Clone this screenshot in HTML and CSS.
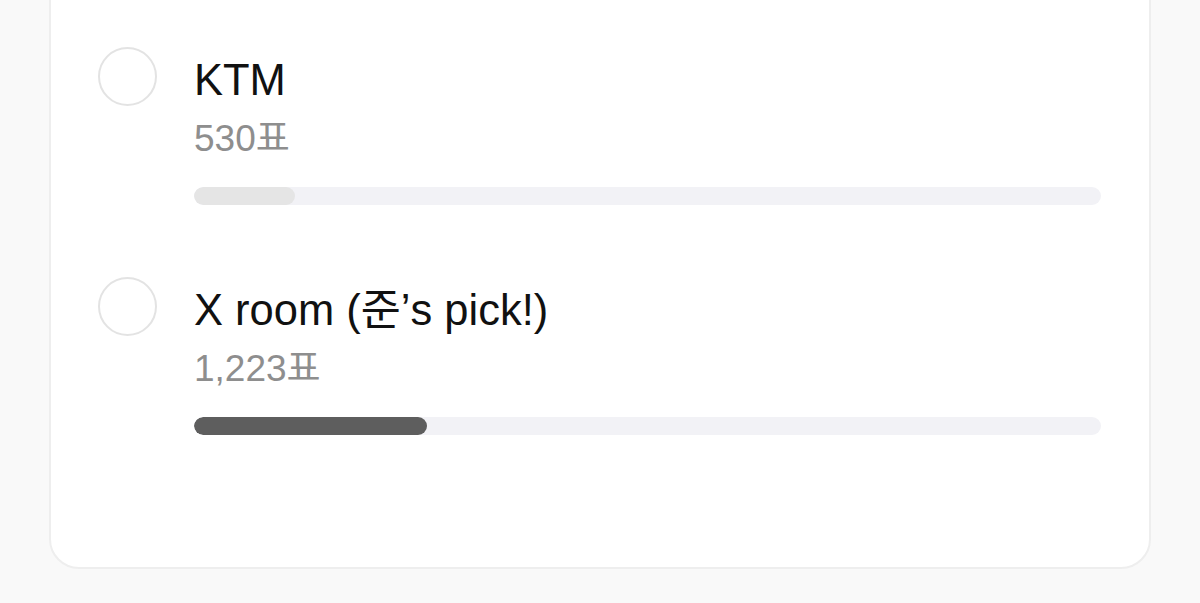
FILE: index.html
```html
<!DOCTYPE html>
<html lang="ko">
<head>
<meta charset="utf-8">
<title>Poll</title>
<link rel="stylesheet" href="styles.css">
</head>
<body>
<div class="card">
  <div class="option">
    <div class="radio"></div>
    <div class="content">
      <div class="title">KTM</div>
      <div class="count">530표</div>
      <div class="track"><div class="fill fill-light" style="width: 11.1%"></div></div>
    </div>
  </div>
  <div class="option">
    <div class="radio"></div>
    <div class="content">
      <div class="title">X room (준’s pick!)</div>
      <div class="count">1,223표</div>
      <div class="track"><div class="fill fill-dark" style="width: 25.7%"></div></div>
    </div>
  </div>
</div>
</body>
</html>
```

FILE: styles.css
```css
html, body {
  margin: 0;
  padding: 0;
  background: #f9f9f9;
  height: 603px;
  overflow: hidden;
}

body {
  font-family: "Liberation Sans", "Noto Sans CJK KR", sans-serif;
}

.card {
  box-sizing: border-box;
  width: 1102px;
  margin: -60px 0 0 49px;
  padding: 105px 48px 132px 47px;
  background: #ffffff;
  border: 2px solid #eeeeee;
  border-radius: 30px;
  display: flex;
  flex-direction: column;
  gap: 72px;
}

.option {
  display: flex;
  align-items: flex-start;
  gap: 37px;
}

.radio {
  box-sizing: border-box;
  flex: 0 0 59px;
  width: 59px;
  height: 59px;
  border: 2px solid #e3e3e3;
  border-radius: 50%;
}

.content {
  flex: 1;
  padding-top: 7px;
}

.title {
  font-size: 43.5px;
  line-height: 52px;
  color: #111111;
}

.count {
  margin-top: 12px;
  font-size: 37px;
  line-height: 42px;
  color: #8e8e8e;
}

.track {
  margin-top: 27px;
  height: 18px;
  border-radius: 9px;
  background: #f2f2f6;
  overflow: hidden;
}

.fill {
  height: 100%;
  border-radius: 9px;
}

.fill-light {
  background: #e5e5e5;
}

.fill-dark {
  background: #5e5e5e;
}
```
